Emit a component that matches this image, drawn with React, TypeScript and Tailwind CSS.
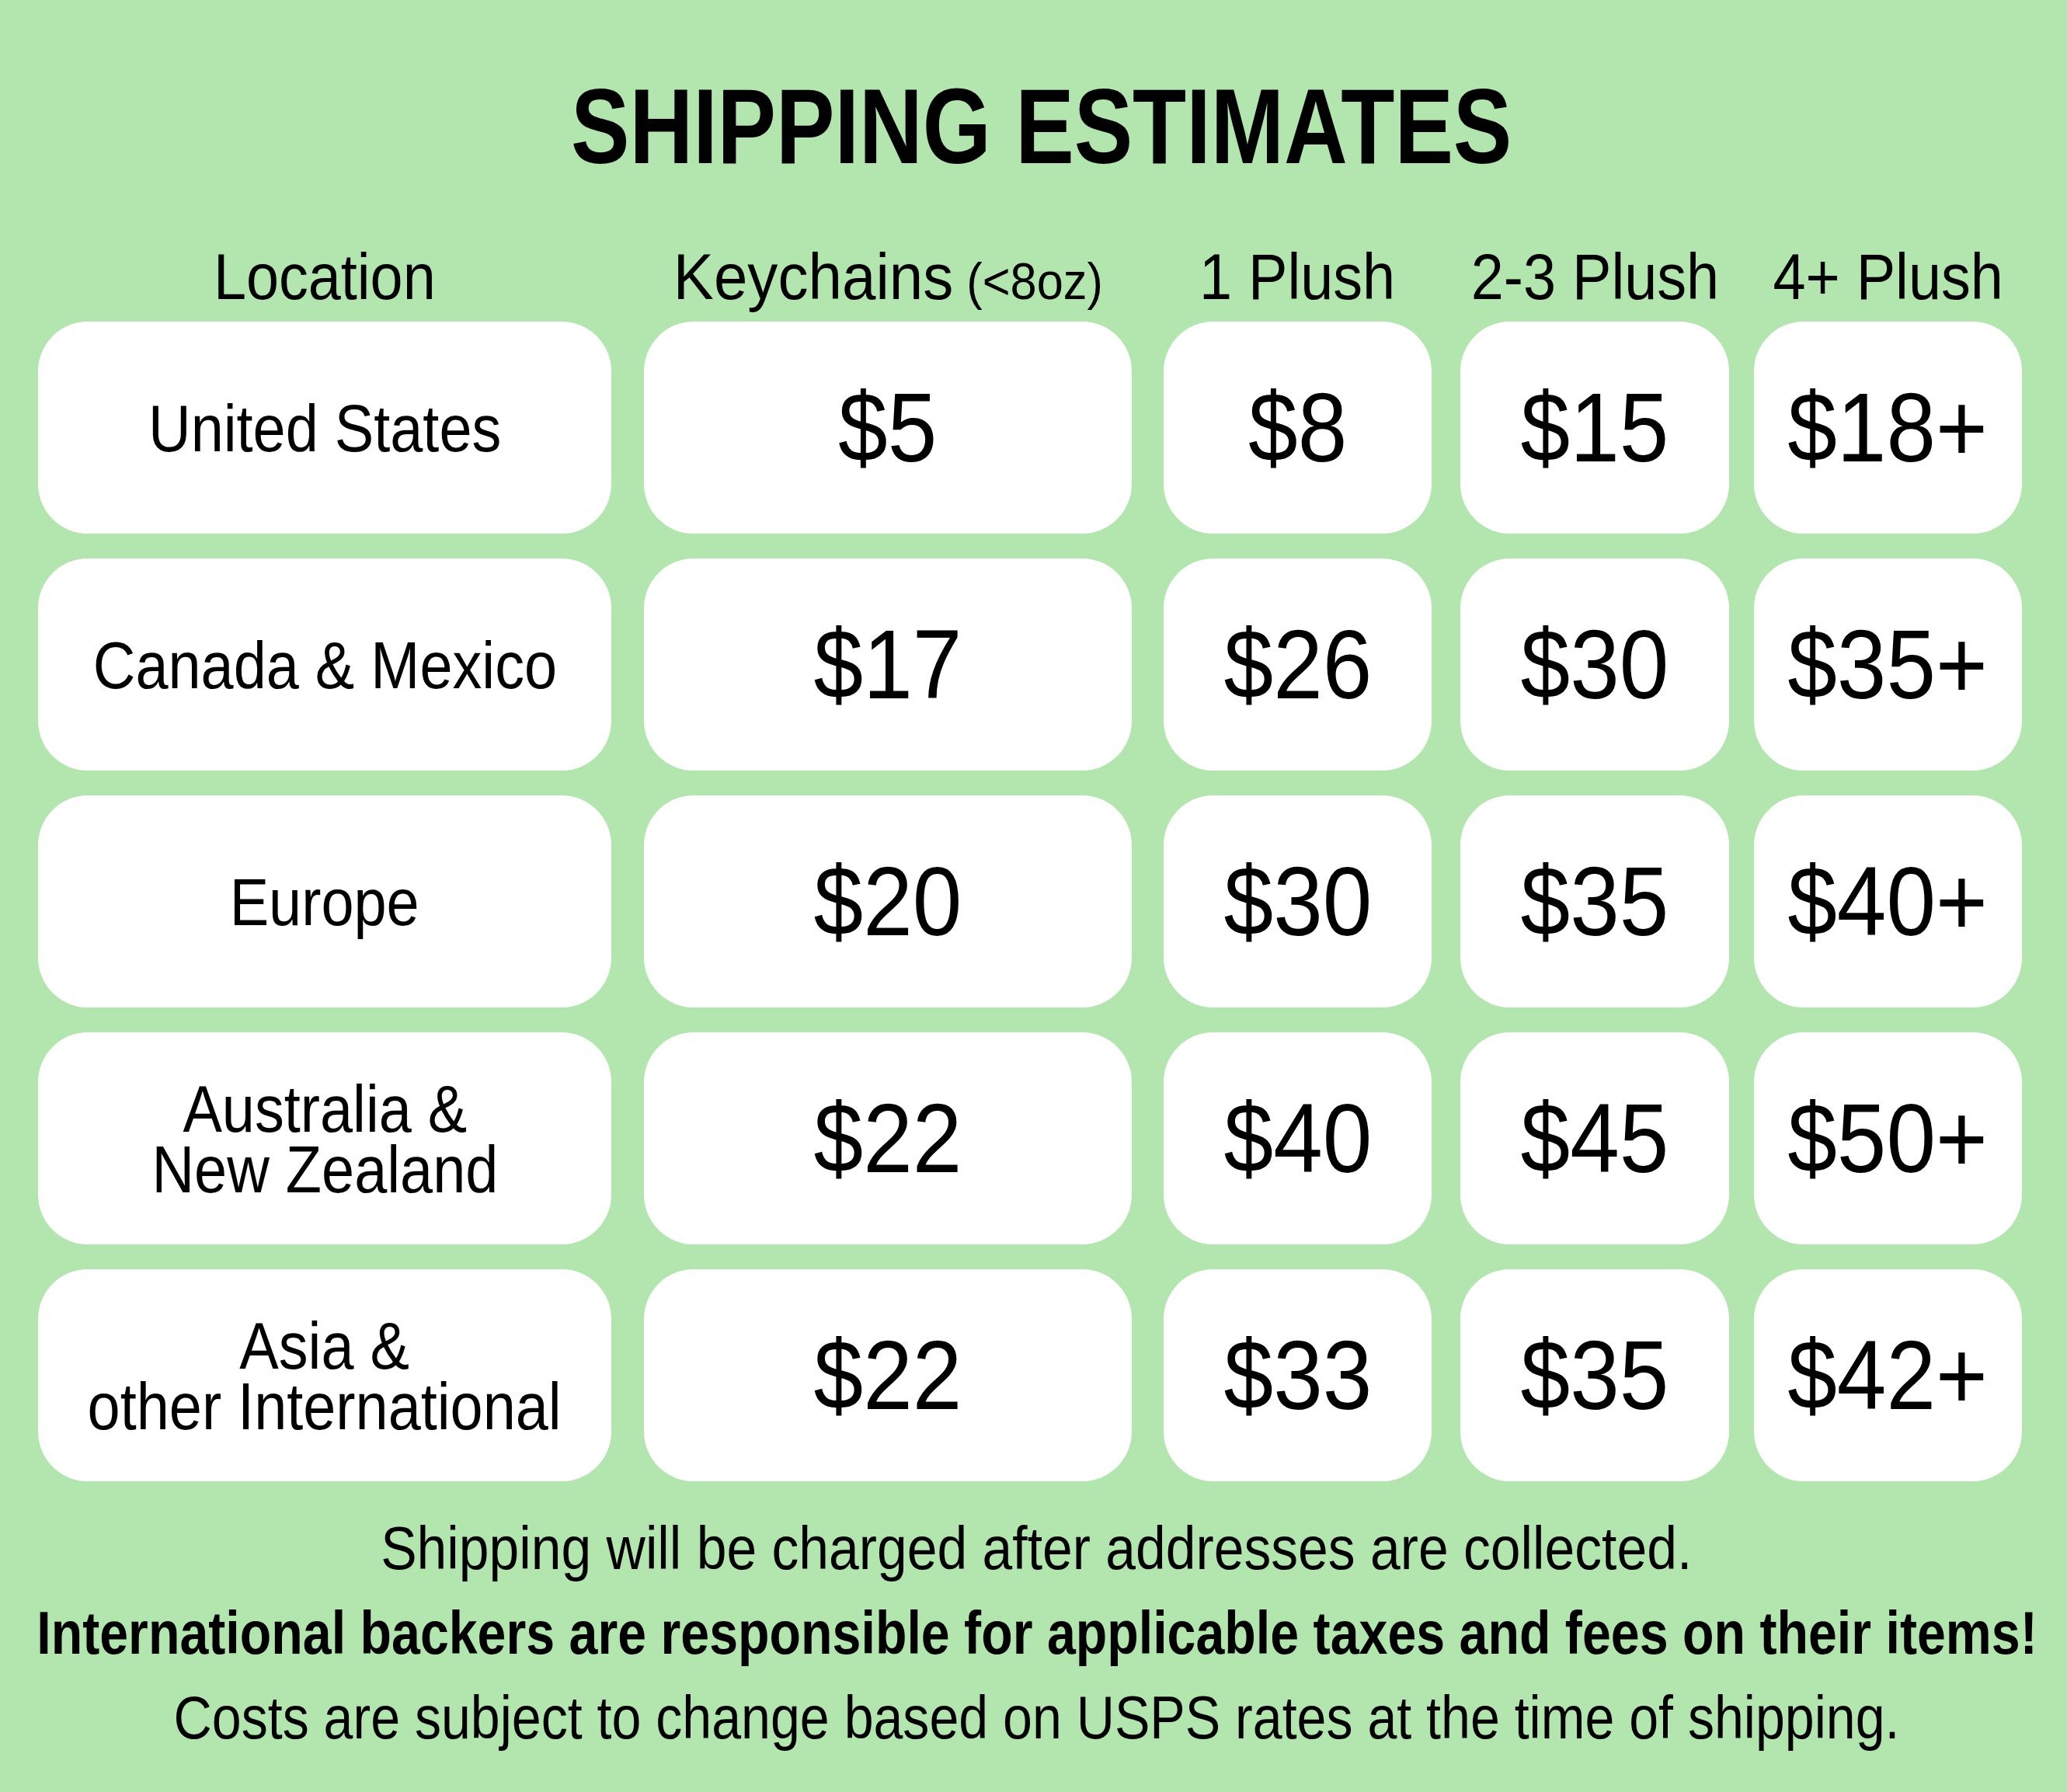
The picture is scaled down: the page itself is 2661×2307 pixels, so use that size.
const headers = ['Location', 'Keychains', '1 Plush', '2-3 Plush', '4+ Plush']

const rows = [
    { loc: 'United States', prices: ['$5', '$8', '$15', '$18+'] },
    { loc: 'Canada & Mexico', prices: ['$17', '$26', '$30', '$35+'] },
    { loc: 'Europe', prices: ['$20', '$30', '$35', '$40+'] },
    { loc: 'Australia &\nNew Zealand', prices: ['$22', '$40', '$45', '$50+'] },
    { loc: 'Asia &\nother International', prices: ['$22', '$33', '$35', '$42+'] },
]

// gaps between the boxes aren't even, so each column carries its own left margin
const cols = 'grid grid-cols-[738px_670px_386px_383px_377px]'
const gap = ['', 'ml-[42px]', 'ml-[41px]', 'ml-[37px]', 'ml-[32px]']

function App() {
    return (
        <div className="w-[2661px] h-[2307px] bg-[#b3e5ae] text-black font-['Liberation_Sans',Arial,sans-serif] flex flex-col items-center overflow-hidden">
            <h1 className="mt-[93px] ml-[20px] text-[138px] leading-none font-bold">
                <span className="inline-block scale-x-[0.82]">SHIPPING ESTIMATES</span>
            </h1>

            {/* column heads */}
            <div className={`${cols} self-start ml-[49px] mt-[83px] mb-[16px] h-[84px]`}>
                {headers.map((h, i) => (
                    <div key={h} className={`${gap[i]} flex justify-center text-[84px] leading-none whitespace-nowrap`}>
                        {h === 'Keychains' ? (
                            <span className="inline-block scale-x-[0.93]">
                                Keychains<span className="text-[66px]"> (&lt;8oz)</span>
                            </span>
                        ) : (
                            <span className="inline-block scale-x-[0.9]">{h}</span>
                        )}
                    </div>
                ))}
            </div>

            <div className={`${cols} self-start ml-[49px] gap-y-[32px]`}>
                {rows.map((r, i) => (
                    <div key={i} className="contents">
                        <div className="h-[273px] bg-white rounded-[64px] flex items-center justify-center text-[86px] leading-[78px] whitespace-pre text-center">
                            <span className="inline-block scale-x-[0.88]">{r.loc}</span>
                        </div>
                        {r.prices.map((p, j) => (
                            <div
                                key={j}
                                className={`${gap[j + 1]} h-[273px] bg-white rounded-[64px] flex items-center justify-center text-[127px] leading-none`}
                            >
                                <span className="inline-block scale-x-[0.9]">{p}</span>
                            </div>
                        ))}
                    </div>
                ))}
            </div>

            <div className="mt-[32px] ml-[8px] flex flex-col items-center text-[78px] leading-[109px] whitespace-nowrap">
                <span className="inline-block scale-x-[0.893]">Shipping will be charged after addresses are collected.</span>
                <span className="inline-block scale-x-[0.85] font-bold">
                    International backers are responsible for applicable taxes and fees on their items!
                </span>
                <span className="inline-block scale-x-[0.873]">
                    Costs are subject to change based on USPS rates at the time of shipping.
                </span>
            </div>
        </div>
    )
}

export default App
